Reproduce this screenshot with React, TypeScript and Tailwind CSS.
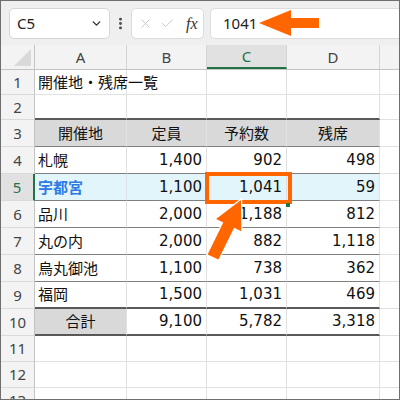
import { Check, ChevronDown, EllipsisVertical, X } from "lucide-react";

type Row = {
  n: number;
  h: number;
  cells: [string, string, string, string];
  kind?: "title" | "head" | "data" | "pick" | "total" | "blank" | "beforeHead";
  lastData?: boolean;
};

const ROWS: Row[] = [
  { n: 1,  h: 25, cells: ["開催地・残席一覧", "", "", ""], kind: "title" },
  { n: 2,  h: 25, cells: ["", "", "", ""], kind: "beforeHead" },
  { n: 3,  h: 27, cells: ["開催地", "定員", "予約数", "残席"], kind: "head" },
  { n: 4,  h: 27, cells: ["札幌", "1,400", "902", "498"], kind: "data" },
  { n: 5,  h: 27, cells: ["宇都宮", "1,100", "1,041", "59"], kind: "pick" },
  { n: 6,  h: 27, cells: ["品川", "2,000", "1,188", "812"], kind: "data" },
  { n: 7,  h: 27, cells: ["丸の内", "2,000", "882", "1,118"], kind: "data" },
  { n: 8,  h: 27, cells: ["烏丸御池", "1,100", "738", "362"], kind: "data" },
  { n: 9,  h: 27, cells: ["福岡", "1,500", "1,031", "469"], kind: "data", lastData: true },
  { n: 10, h: 27, cells: ["合計", "9,100", "5,782", "3,318"], kind: "total" },
  { n: 11, h: 26, cells: ["", "", "", ""], kind: "blank" },
  { n: 12, h: 26, cells: ["", "", "", ""], kind: "blank" },
  { n: 13, h: 26, cells: ["", "", "", ""], kind: "blank" },
];

const COLS = ["w-[92px]", "w-[80px]", "w-[80px]", "w-[93px]"];
const FONT = "font-['DejaVu_Sans','Noto_Sans_CJK_JP',sans-serif]";
const JP = "font-['Noto_Sans_CJK_JP',sans-serif]";

function cellBorder(row: Row) {
  if (row.kind === "beforeHead" || row.lastData || row.kind === "total") return "border-b-2 border-b-[#595959]";
  if (row.kind === "head" || row.kind === "data" || row.kind === "pick") return "border-b border-b-[#7f7f7f]";
  return "border-b border-b-[#e1e1e1]";
}

function SheetRow({ row }: { row: Row }) {
  const picked = row.kind === "pick";
  return (
    <div className="flex" style={{ height: row.h }}>
      <div
        className={`w-[34px] shrink-0 flex items-center justify-center border-b border-b-[#dadada] text-[15px] font-['Noto_Sans',sans-serif] ${
          picked
            ? "bg-[#e1e1e1] text-[#217346] border-r-2 border-r-[#217346]"
            : "bg-[#f3f3f3] text-[#444] border-r border-r-[#c4c4c4]"
        }`}
      >
        {row.n}
      </div>
      {row.cells.map((c, i) => {
        let bg = "";
        if (row.kind === "head") bg = "bg-[#d9d9d9]";
        if (picked) bg = "bg-[#e1f5fb]";
        if (row.kind === "total" && i === 0) bg = "bg-[#d9d9d9]";
        const center = row.kind === "head" || (row.kind === "total" && i === 0);
        const align = center ? "justify-center" : i === 0 ? "justify-start pl-[3px]" : "justify-end pr-[4px]";
        const text =
          picked && i === 0
            ? `font-bold text-[#2f7be6] ${JP}`
            : i === 0 || row.kind === "head"
            ? `text-[#111] ${JP}`
            : `text-[#111] ${FONT}`;
        return (
          <div
            key={i}
            className={`${COLS[i]} shrink-0 flex items-center whitespace-nowrap text-[15px] border-r border-r-[#e1e1e1] ${cellBorder(
              row
            )} ${bg} ${align} ${text} ${row.kind === "title" && i === 0 ? "overflow-visible relative z-10" : "overflow-hidden"}`}
          >
            {c}
          </div>
        );
      })}
      <div className="flex-1 border-b border-b-[#e1e1e1]" />
    </div>
  );
}

export default function App() {
  return (
    <div className="relative w-[400px] h-[400px] overflow-hidden bg-white border border-[#6f6f6f]">
      {/* ── Toolbar ─────────────────────────────── */}
      <div className="h-[44px] bg-[#efefef] flex items-start pt-[7px] pl-[8px] gap-0">
        <div className="w-[101px] h-[31px] bg-white border border-[#d6d6d6] rounded-[5px] flex items-center justify-between pl-[7px] pr-[6px]">
          <span className="text-[15px] text-[#222] font-['Noto_Sans',sans-serif]">C5</span>
          <ChevronDown size={13} strokeWidth={2.6} className="text-[#333]" />
        </div>
        <div className="w-[21px] h-[31px] flex items-center justify-center">
          <EllipsisVertical size={15} strokeWidth={2.6} className="text-[#444]" />
        </div>
        <div className="w-[73px] h-[31px] bg-white border border-[#dcdcdc] rounded-[5px] flex items-center pl-[6px] gap-[7px]">
          <X size={15} strokeWidth={1.3} className="text-[#bdbdbd]" />
          <Check size={15} strokeWidth={1.3} className="text-[#bdbdbd]" />
          <span className="ml-[4px] text-[16px] italic text-[#333] font-['Liberation_Serif',serif]">fx</span>
        </div>
        <div className="ml-[6px] flex-1 h-[31px] bg-white border border-[#dcdcdc] border-r-0 rounded-l-[5px] flex items-center pl-[12px]">
          <span className="text-[15px] text-[#222] font-['Noto_Sans',sans-serif]">1041</span>
        </div>
      </div>

      {/* ── Column headers ──────────────────────── */}
      <div className="flex h-[25px] bg-[#f3f3f3] border-b border-b-[#c4c4c4] text-[15px] text-[#444] font-['Noto_Sans',sans-serif]">
        <div className="w-[34px] shrink-0 border-r border-r-[#c4c4c4] flex items-end justify-end pr-[3px] pb-[3px]">
          <svg width="17" height="17" viewBox="0 0 17 17">
            <polygon points="17,0 17,17 0,17" fill="#d9d9d9" />
          </svg>
        </div>
        <div className="w-[92px] shrink-0 border-r border-r-[#d4d4d4] flex items-center justify-center">A</div>
        <div className="w-[80px] shrink-0 border-r border-r-[#d4d4d4] flex items-center justify-center">B</div>
        <div className="w-[80px] shrink-0 border-r border-r-[#d4d4d4] border-b-2 border-b-[#217346] bg-[#e1e1e1] text-[#217346] flex items-center justify-center">
          C
        </div>
        <div className="w-[93px] shrink-0 border-r border-r-[#d4d4d4] flex items-center justify-center">D</div>
        <div className="flex-1" />
      </div>

      {/* ── Sheet ───────────────────────────────── */}
      {ROWS.map((r) => (
        <SheetRow key={r.n} row={r} />
      ))}

      {/* selected cell box + fill handle */}
      <div className="absolute left-[204px] top-[171px] w-[87px] h-[32px] border-4 border-[#ff6600]" />
      <div className="absolute left-[285px] top-[202px] w-[4px] h-[4px] bg-[#217346]" />

      {/* arrows */}
      <svg className="absolute left-0 top-0 pointer-events-none" width="400" height="400" viewBox="0 0 400 400">
        <polygon
          points="258,22 290,9 290,17 318,17 318,27 290,27 290,35"
          fill="#ff6600"
        />
        <polygon
          points="240,199 240.3,230.3 233.1,226.7 217.4,258.6 206.6,253.4 222.3,221.5 215.1,217.9"
          fill="#ff6600"
          stroke="#ffffff"
          strokeWidth="2.5"
          strokeLinejoin="miter"
          style={{ paintOrder: "stroke" }}
        />
      </svg>
    </div>
  );
}
